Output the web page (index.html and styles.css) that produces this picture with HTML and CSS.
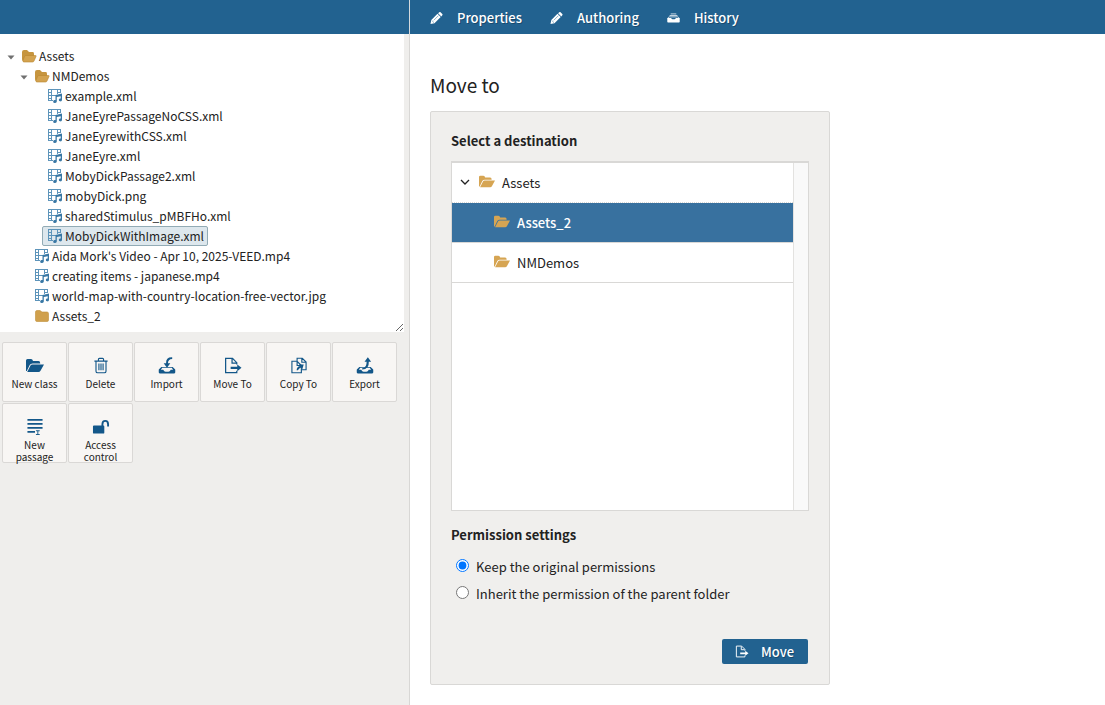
FILE: index.html
```html
<!DOCTYPE html>
<html lang="en">
<head>
<meta charset="utf-8">
<title>Assets</title>
<link rel="stylesheet" href="styles.css">
</head>
<body>
<svg class="sprite" aria-hidden="true">
  <symbol id="tree-open" viewBox="0 0 16 14"><path fill="#c6953f" d="M1 3Q1 1 3 1H6L8 3H12Q13 3 13 5V7H5L2 12Q1 12 1 10Z"/><path fill="#d3a350" stroke="#b9862f" stroke-width=".6" d="M5 6.500H14.500Q15.500 6.500 15 7.500L13 12Q12.600 13 11.500 13H3Q1.500 13 2 11.500L3.500 7.500Q4 6.500 5 6.500Z"/></symbol>
  <symbol id="tree-closed" viewBox="0 0 16 14"><path fill="#d0a04c" stroke="#c08e38" stroke-width=".6" d="M1.500 3Q1.500 1.500 3 1.500H6L8 3H13Q14.500 3 14.500 4.500V11Q14.500 12.500 13 12.500H3Q1.500 12.500 1.500 11Z"/></symbol>
  <symbol id="media" viewBox="0 0 14 14"><path fill="none" stroke="#5d94ba" d="M.5 0V11.500M3.500 .5V11.500M9.500 .5V5M12.500 0V4M0 .5H13M.5 3.500H3.500M9.500 3.500H13M.5 6.500H8M.5 9.500H3.500M0 11.500H5"/><path fill="#3978a5" d="M7.500 6L14 4.500V11A1.600 1.400 0 1 1 12.700 9.600V7.200L8.800 8V12.500A1.800 1.500 0 1 1 7.500 11Z"/></symbol>
  <symbol id="folder-open" viewBox="0 0 18 14"><path fill="currentColor" d="M0 12.500V2Q0 .5 1.500 .5H5Q6.500 .5 7 2.500H12.500Q14.200 2.500 14.200 4.500V5H6.500Q4.500 5 3.700 6.500L.8 12.500ZM1.200 13.500L4.500 7Q5 6 6.500 6H18L14.500 12.300Q13.800 13.500 12.500 13.500Z"/></symbol>
  <symbol id="trash" viewBox="0 0 18 18"><path fill="none" stroke="currentColor" stroke-width="1.200" d="M2 4.300H16M6.300 4V2.500Q6.300 1.500 7.300 1.500H10.700Q11.700 1.500 11.700 2.500V4M3.700 4.500V15Q3.700 16.700 5.500 16.700H12.500Q14.300 16.700 14.300 15V4.500M6.800 7V14M9 7V14M11.200 7V14"/></symbol>
  <symbol id="tray" viewBox="0 0 18 8"><path fill="currentColor" fill-rule="evenodd" d="M3 .5H15L18 3.500V6Q18 7.500 16.500 7.500H1.500Q0 7.500 0 6V3.500ZM4 1.500L2.500 3.500H5Q6 5.500 7.500 5.500H10.500Q12 5.500 13 3.500H15.500L14 1.500Z"/></symbol>
  <symbol id="import" viewBox="0 0 18 18"><use href="#tray" y="10" width="18" height="8"/><path fill="currentColor" d="M14.500 .3Q7.800 0 8 6.500H5.500L9 11.500L12.500 6.500H10Q10 2.300 14.500 2Z"/></symbol>
  <symbol id="export" viewBox="0 0 18 18"><use href="#tray" y="10" width="18" height="8"/><path fill="currentColor" d="M6 12Q11 11.500 10.700 5H8.500L12 .3L15.500 5H13Q13.500 13 6 13.300Z"/></symbol>
  <symbol id="move" viewBox="0 0 18 18"><path fill="none" stroke="currentColor" stroke-width="1.300" d="M13 8V6L8.500 1.500H1.200V16.500H13V14.500M8 2V6.500H12.500"/><path fill="currentColor" d="M6.500 10.300H13.500V8L18 11.500L13.500 15V12.700H6.500Z"/></symbol>
  <symbol id="copy" viewBox="0 0 18 18"><path fill="none" stroke="currentColor" stroke-width="1.200" d="M7 4V1.300H12.500L16.500 5.300V13.500H12M12 1.500V5.500H16M1.500 4.500H7L11.500 9V16.700H1.500ZM7 5V9H11"/><path fill="currentColor" d="M6.500 14Q6.500 10.500 10 9.500L9 8H14L12.500 13L11.300 11.200Q9 12 7.800 14Z"/></symbol>
  <symbol id="passage" viewBox="0 0 18 18"><path fill="currentColor" d="M1 1H17V3H1ZM1 5.200H17V7.200H1ZM1 9.500H17V11.500H1ZM1 13.700H9V15.700H1Z"/><path fill="none" stroke="currentColor" d="M10 13.500H14M12 13.500V17.500M10 17.500H14"/></symbol>
  <symbol id="unlock" viewBox="0 0 18 18"><path fill="currentColor" d="M1.500 8H9.500V6.500Q9.500 2 13.500 2Q17.500 2 17.500 6.500V9H15.500V6.500Q15.500 4 13.500 4Q11.500 4 11.500 6.500V8Q12.500 8 12.500 9V15.500Q12.500 16.500 11.500 16.500H1.500Q.5 16.500 .5 15.500V9Q.5 8 1.500 8Z"/></symbol>
  <symbol id="pencil" viewBox="0 0 12 12"><path fill="currentColor" d="M0 12L.8 8L7 1.800L10.200 5L4 11.200ZM7.600 1.200L8.800 .2Q9.500 -.3 10 .2L11.800 2Q12.300 2.500 11.800 3.200L10.800 4.400Z"/><path fill="none" stroke="#226290" stroke-width=".5" d="M1.300 8.500L3.500 10.700M3.300 8.300L8 3.600"/></symbol>
  <symbol id="history" viewBox="0 0 14 10"><path fill="none" stroke="currentColor" stroke-width=".8" d="M4 .6H10M2.800 2.300H11.200M.8 5L2.300 3.800H11.700L13.200 5"/><path fill="currentColor" d="M.3 5H4.500Q5 6.300 6 6.300H8Q9 6.300 9.500 5H13.700V9Q13.700 9.800 12.900 9.800H1.100Q.3 9.800 .3 9Z"/></symbol>
  <symbol id="arrow" viewBox="0 0 8 5"><path fill="#707070" d="M.5 .5H7.500L4 4.500Z"/></symbol>
  <symbol id="chevron" viewBox="0 0 10 6"><path fill="none" stroke="#222" stroke-width="1.300" d="M1 1L5 5L9 1"/></symbol>
</svg>

<header class="topbar">
  <div class="topbar-side"></div>
  <nav class="tabs">
    <a class="tab" href="#"><svg class="tab-icon"><use href="#pencil"/></svg>Properties</a>
    <a class="tab" href="#"><svg class="tab-icon"><use href="#pencil"/></svg>Authoring</a>
    <a class="tab" href="#"><svg class="tab-icon tab-icon-wide"><use href="#history"/></svg>History</a>
  </nav>
</header>

<div class="layout">
  <aside class="sidebar">
    <div class="tree">
      <ul class="branch">
        <li><a class="node" href="#"><svg class="arrow"><use href="#arrow"/></svg><svg class="node-icon"><use href="#tree-open"/></svg>Assets</a>
          <ul class="branch nested">
            <li><a class="node" href="#"><svg class="arrow"><use href="#arrow"/></svg><svg class="node-icon"><use href="#tree-open"/></svg>NMDemos</a>
              <ul class="branch nested">
                <li><a class="node leaf" href="#"><svg class="node-icon"><use href="#media"/></svg>example.xml</a></li>
                <li><a class="node leaf" href="#"><svg class="node-icon"><use href="#media"/></svg>JaneEyrePassageNoCSS.xml</a></li>
                <li><a class="node leaf" href="#"><svg class="node-icon"><use href="#media"/></svg>JaneEyrewithCSS.xml</a></li>
                <li><a class="node leaf" href="#"><svg class="node-icon"><use href="#media"/></svg>JaneEyre.xml</a></li>
                <li><a class="node leaf" href="#"><svg class="node-icon"><use href="#media"/></svg>MobyDickPassage2.xml</a></li>
                <li><a class="node leaf" href="#"><svg class="node-icon"><use href="#media"/></svg>mobyDick.png</a></li>
                <li><a class="node leaf" href="#"><svg class="node-icon"><use href="#media"/></svg>sharedStimulus_pMBFHo.xml</a></li>
                <li><a class="node leaf selected" href="#"><svg class="node-icon"><use href="#media"/></svg>MobyDickWithImage.xml</a></li>
              </ul>
            </li>
            <li><a class="node leaf" href="#"><svg class="node-icon"><use href="#media"/></svg>Aida Mork's Video - Apr 10, 2025-VEED.mp4</a></li>
            <li><a class="node leaf" href="#"><svg class="node-icon"><use href="#media"/></svg>creating items - japanese.mp4</a></li>
            <li><a class="node leaf" href="#"><svg class="node-icon"><use href="#media"/></svg>world-map-with-country-location-free-vector.jpg</a></li>
            <li><a class="node leaf" href="#"><svg class="node-icon"><use href="#tree-closed"/></svg>Assets_2</a></li>
          </ul>
        </li>
      </ul>
    </div>
    <div class="actions">
      <button class="action" type="button"><svg class="action-icon"><use href="#folder-open"/></svg>New class</button>
      <button class="action" type="button"><svg class="action-icon"><use href="#trash"/></svg>Delete</button>
      <button class="action" type="button"><svg class="action-icon"><use href="#import"/></svg>Import</button>
      <button class="action" type="button"><svg class="action-icon"><use href="#move"/></svg>Move To</button>
      <button class="action" type="button"><svg class="action-icon"><use href="#copy"/></svg>Copy To</button>
      <button class="action" type="button"><svg class="action-icon"><use href="#export"/></svg>Export</button>
      <button class="action" type="button"><svg class="action-icon"><use href="#passage"/></svg>New passage</button>
      <button class="action" type="button"><svg class="action-icon"><use href="#unlock"/></svg>Access control</button>
    </div>
  </aside>

  <main class="content">
    <h1 class="title">Move to</h1>
    <form class="panel">
      <h2 class="heading">Select a destination</h2>
      <div class="picker">
        <ul class="destinations">
          <li><button class="dest root" type="button"><svg class="chevron"><use href="#chevron"/></svg><svg class="dest-icon"><use href="#folder-open"/></svg>Assets</button></li>
          <li><button class="dest child chosen" type="button"><svg class="dest-icon"><use href="#folder-open"/></svg>Assets_2</button></li>
          <li><button class="dest child" type="button"><svg class="dest-icon"><use href="#folder-open"/></svg>NMDemos</button></li>
        </ul>
        <div class="track"></div>
      </div>
      <h2 class="heading">Permission settings</h2>
      <div class="options">
        <label class="option"><input class="radio" type="radio" name="acl" checked>Keep the original permissions</label>
        <label class="option"><input class="radio" type="radio" name="acl">Inherit the permission of the parent folder</label>
      </div>
      <div class="footer">
        <button class="submit" type="button"><svg class="submit-icon"><use href="#move"/></svg>Move</button>
      </div>
    </form>
  </main>
</div>
</body>
</html>
```

FILE: styles.css
```css
* { box-sizing: border-box; }

body {
  margin: 0;
  min-height: 100vh;
  display: flex;
  flex-direction: column;
  background: #fff;
  color: #222;
  font-family: "Noto Sans CJK SC", "Noto Sans", sans-serif;
  font-size: 13px;
  line-height: 20px;
}

button { font: inherit; color: inherit; cursor: pointer; }
a { color: inherit; text-decoration: none; }
svg { flex: none; }
.sprite { position: absolute; width: 0; height: 0; }

.topbar {
  display: flex;
  height: 34px;
  background: #226290;
  color: #fff;
}
.topbar-side { flex: 0 0 410px; border-right: 1px solid #d4d9dd; }
.tabs { display: flex; gap: 28px; padding: 2px 0 0 20px; }
.tab {
  display: flex;
  align-items: center;
  gap: 14px;
  font-weight: 500;
  text-shadow: 1px 1px 0 rgba(0, 0, 0, .25);
}
.tab-icon { width: 13px; height: 12px; }
.tab-icon-wide { height: 10px; }

.layout { flex: 1; display: flex; }
.sidebar {
  flex: 0 0 410px;
  background: #efeeec;
  border-right: 1px solid #d8d7d5;
}

.tree {
  width: 404px;
  max-width: 100%;
  height: 298px;
  padding: 12px 0 0 5px;
  background: #fff;
  overflow: hidden;
  resize: both;
  font-size: 12px;
}
.branch { list-style: none; margin: 0; padding: 0; }
.nested { padding-left: 13px; }
.node {
  display: flex;
  align-items: center;
  width: max-content;
  height: 20px;
  padding: 0 5px 0 1px;
  border: 1px solid transparent;
  border-radius: 2px;
}
.arrow { width: 8px; height: 5px; margin: 3px 6px 0 0; }
.node-icon { width: 16px; height: 14px; margin-right: 2px; }
.leaf { margin-left: 11px; padding: 0 3px 0 4px; }
.selected { background: #dde7ed; border-color: #92abb5; }

.actions {
  display: flex;
  flex-wrap: wrap;
  gap: 1px;
  padding: 10px 2px;
}
.action {
  display: flex;
  flex-direction: column;
  align-items: center;
  gap: 4px;
  width: 65px;
  height: 60px;
  padding: 14px 6px 0;
  border: 1px solid #dad8d6;
  border-radius: 2px;
  background: #f8f6f4;
  font-size: 10px;
  line-height: 12px;
}
.action-icon { width: 18px; height: 17px; color: #135789; }

.content { flex: 1; padding: 37px 20px 20px; }
.title { margin: 0 0 12px; font-size: 19px; line-height: 28px; font-weight: 400; }
.panel {
  width: 100%;
  max-width: 400px;
  padding: 19px 20px 20px;
  background: #f0efed;
  border: 1px solid #d9d8d6;
  border-radius: 2px;
}
.heading { margin: 0; font-size: 13px; line-height: 20px; font-weight: 700; }

.picker {
  display: flex;
  height: 350px;
  margin: 10px 0 14px;
  background: #fff;
  border: 1px solid #d9d8d6;
  border-top-width: 2px;
}
.destinations { flex: 1; list-style: none; margin: 0; padding: 0; }
.track { width: 15px; background: #f9f9f9; border-left: 1px solid #e3e2e0; }
.dest {
  display: flex;
  align-items: center;
  width: 100%;
  height: 40px;
  padding: 0;
  border: 0;
  border-bottom: 1px solid #d9d8d6;
  background: #fff;
}
.root { padding-left: 8px; border-bottom-style: dotted; }
.child { padding-left: 42px; }
.chosen { background: #38719f; color: #fff; font-weight: 500; }
.chevron { width: 10px; height: 6px; margin: 0 9px 2px 0; }
.dest-icon { width: 16px; height: 13px; margin: 0 7px 2px 0; color: #d6a553; }

.options { display: flex; flex-direction: column; gap: 7px; padding: 12px 0 0 5px; }
.option { display: flex; align-items: center; }
.radio { width: 13px; height: 13px; margin: 0 7px 3px 0; }
.footer { display: flex; justify-content: flex-end; padding: 35px 1px 0; }
.submit {
  display: flex;
  align-items: center;
  gap: 12px;
  height: 25px;
  padding: 0 14px 0 13px;
  border: 0;
  border-radius: 2px;
  background: #226290;
  color: #fff;
  font-weight: 500;
  text-shadow: 1px 1px 0 rgba(0, 0, 0, .25);
}
.submit-icon { width: 14px; height: 13px; }
```
